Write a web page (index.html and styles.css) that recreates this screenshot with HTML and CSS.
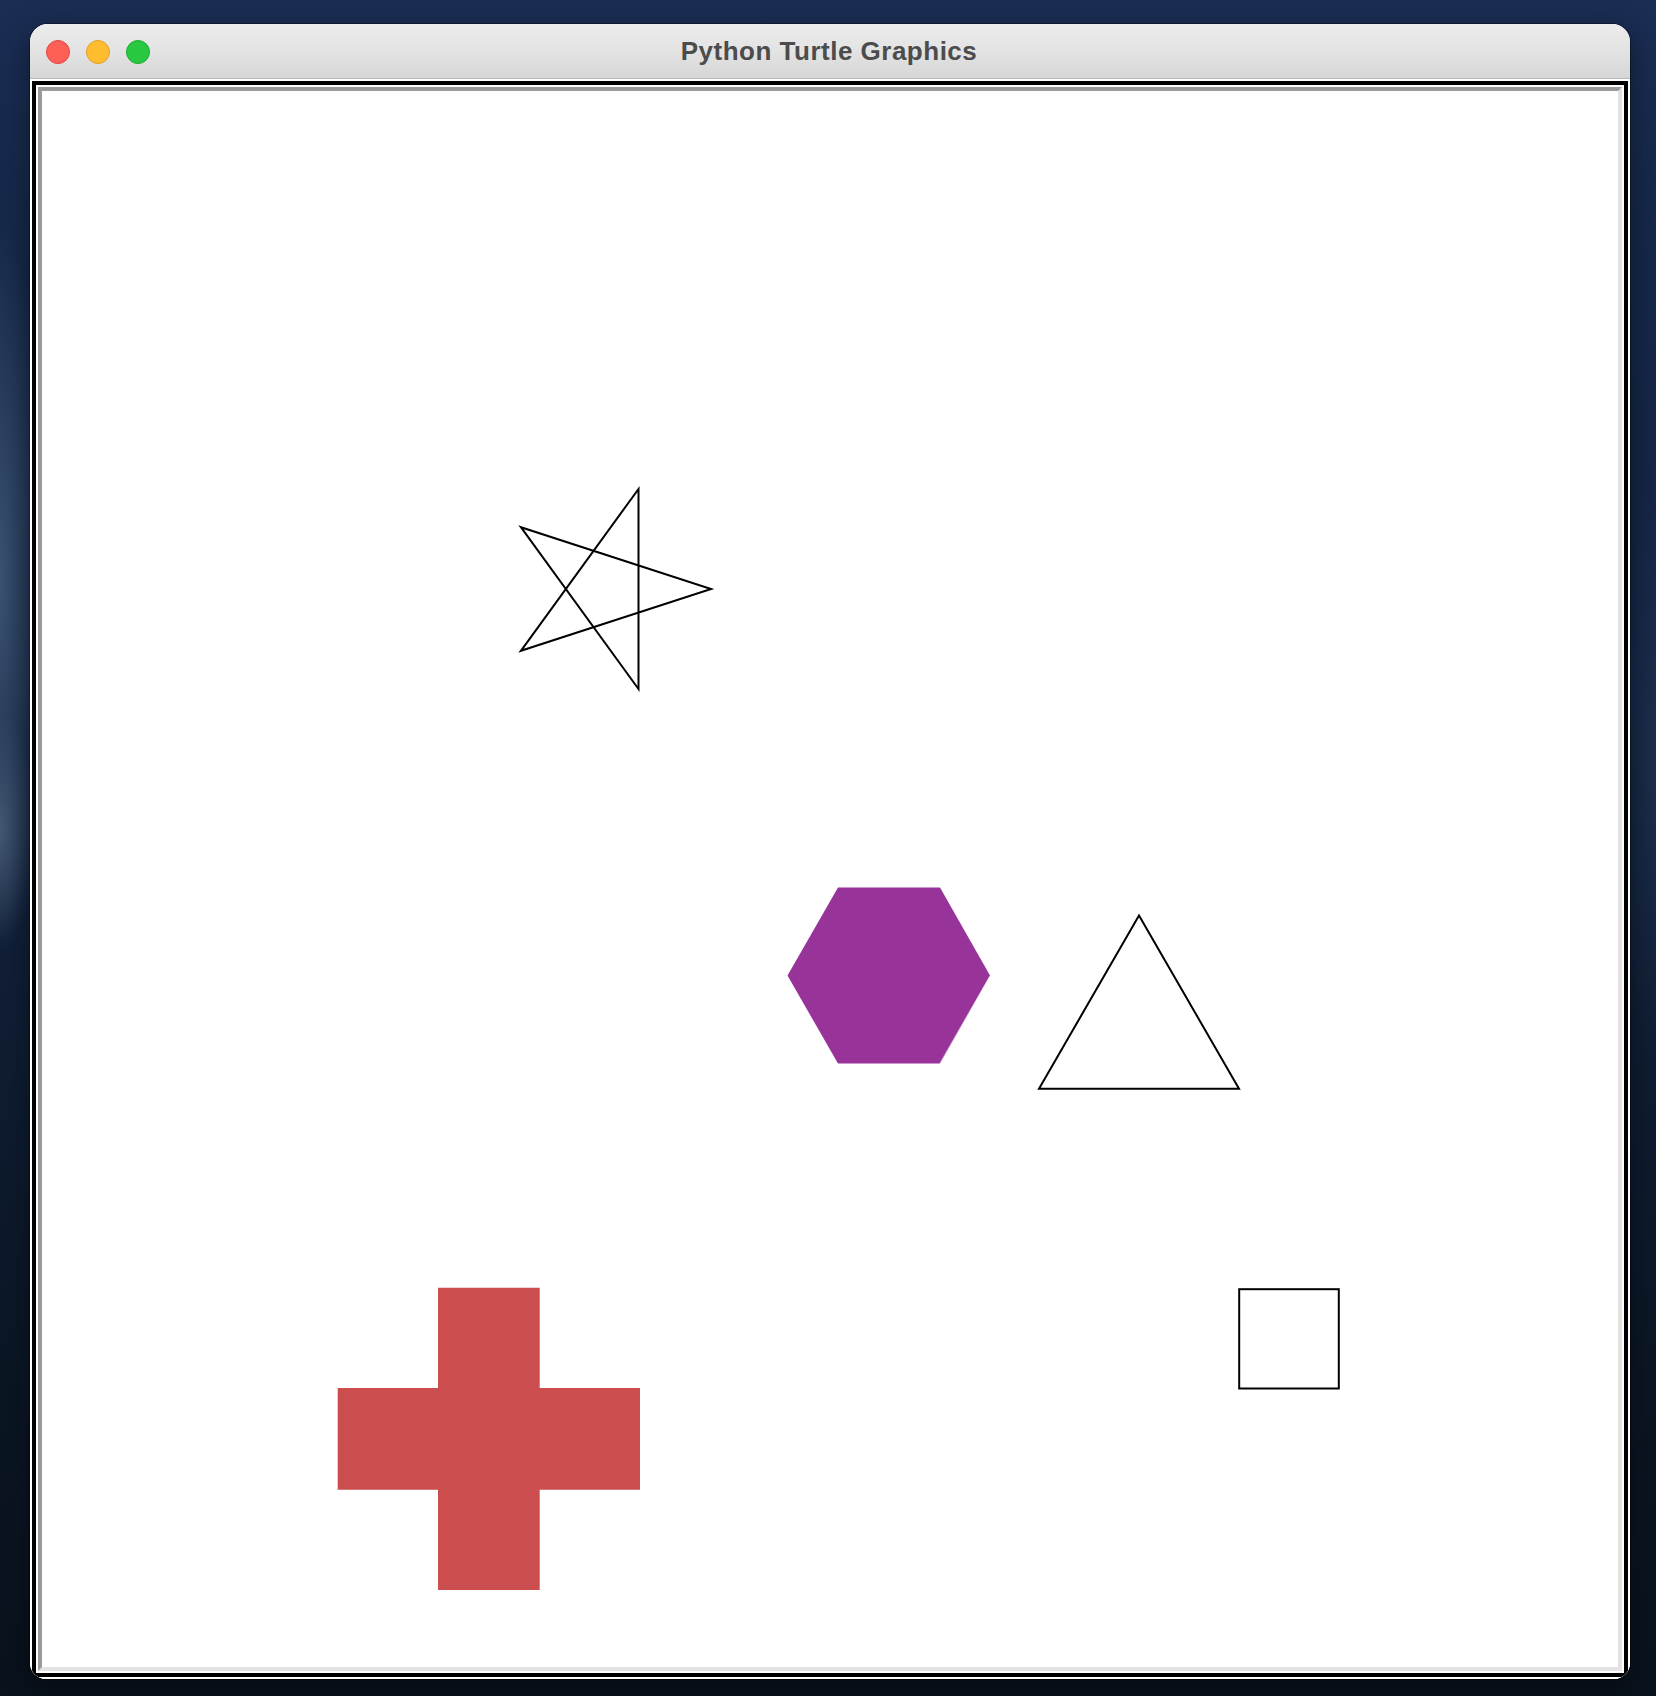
FILE: index.html
```html
<!DOCTYPE html>
<html lang="en">
<head>
<meta charset="utf-8">
<title>Python Turtle Graphics</title>
<link rel="stylesheet" href="styles.css">
</head>
<body>
<div class="desktop">
  <div class="window">
    <div class="titlebar">
      <div class="lights">
        <span class="light close"></span>
        <span class="light minimize"></span>
        <span class="light zoom"></span>
      </div>
      <div class="title">Python Turtle Graphics</div>
      <div class="spacer"></div>
    </div>
    <div class="content">
      <div class="frame">
        <div class="canvas">
          <svg class="drawing" width="1576" height="1576" viewBox="42 91 1576 1576" xmlns="http://www.w3.org/2000/svg">
            <path class="pen" d="M638.5 489 L638.5 689 L520.9 527.2 L711.1 589 L520.9 650.8 Z"/>
            <polygon class="hexagon" points="787.5,975.5 838,887.5 940,887.5 990,975.5 940,1063.5 838,1063.5"/>
            <line class="hex-edge" x1="989.5" y1="976.5" x2="939.5" y2="1063.5"/>
            <path class="pen" d="M1039 1088.7 L1239 1088.7 L1139 915.5 Z"/>
            <rect class="pen" x="1239.2" y="1289.2" width="99.6" height="99.3"/>
            <polygon class="cross" points="438,1287.7 539.7,1287.7 539.7,1388 640,1388 640,1489.7 539.7,1489.7 539.7,1590 438,1590 438,1489.7 337.7,1489.7 337.7,1388 438,1388"/>
          </svg>
        </div>
      </div>
    </div>
  </div>
</div>
</body>
</html>
```

FILE: styles.css
```css
html, body {
  margin: 0;
  padding: 0;
}

body {
  width: 1656px;
  height: 1696px;
  overflow: hidden;
  background:
    radial-gradient(ellipse 50px 360px at 0px 580px, rgba(70, 95, 126, 0.8), rgba(70, 95, 126, 0) 100%),
    radial-gradient(ellipse 36px 120px at 0px 830px, rgba(86, 108, 134, 0.7), rgba(86, 108, 134, 0) 100%),
    radial-gradient(ellipse 40px 300px at 1656px 760px, rgba(36, 56, 86, 0.6), rgba(36, 56, 86, 0) 100%),
    linear-gradient(180deg, #1a2d53 0%, #16294b 12%, #132443 40%, #0f1d33 62%, #0b1624 82%, #09121d 100%);
  font-family: "Liberation Sans", Arial, sans-serif;
}

.desktop {
  padding: 24px 0 0 30px;
}

.window {
  width: 1600px;
  border-radius: 18px 18px 16px 16px;
  overflow: hidden;
  background: #ffffff;
  box-shadow: 0 0 0 1px rgba(0, 0, 0, 0.3), 0 10px 30px rgba(0, 0, 0, 0.45);
}

.titlebar {
  height: 54px;
  border-bottom: 1px solid #b9b9b9;
  background: linear-gradient(180deg, #ececec 0%, #e3e3e3 50%, #d6d6d6 100%);
  display: grid;
  grid-template-columns: 1fr auto 1fr;
  align-items: center;
}

.lights {
  display: flex;
  gap: 16px;
  padding-left: 16px;
  padding-top: 2px;
}

.light {
  width: 24px;
  height: 24px;
  border-radius: 50%;
  box-sizing: border-box;
}

.close {
  background: #fe5f57;
  border: 1px solid #e2463f;
}

.minimize {
  background: #febc2e;
  border: 1px solid #e0a028;
}

.zoom {
  background: #28c840;
  border: 1px solid #1daa2c;
}

.title {
  font-family: "Liberation Sans", Arial, sans-serif;
  font-weight: bold;
  font-size: 26px;
  letter-spacing: 0.5px;
  color: #4c4c4c;
  padding-top: 1px;
  padding-right: 2px;
}

.content {
  padding: 2px;
  background: #ffffff;
}

.frame {
  border: 4px solid #000000;
  padding: 2px;
  background: #ffffff;
}

.canvas {
  border-style: solid;
  border-width: 4px;
  border-color: #9a9a9a #e2e2e2 #e2e2e2 #9a9a9a;
  background: #ffffff;
  line-height: 0;
}

.drawing {
  display: block;
}

.pen {
  fill: none;
  stroke: #000000;
  stroke-width: 2;
  stroke-linejoin: miter;
}

.hexagon {
  fill: #983399;
}

.hex-edge {
  stroke: rgba(255, 255, 255, 0.35);
  stroke-width: 1;
}

.cross {
  fill: #cc4d4d;
}
```
